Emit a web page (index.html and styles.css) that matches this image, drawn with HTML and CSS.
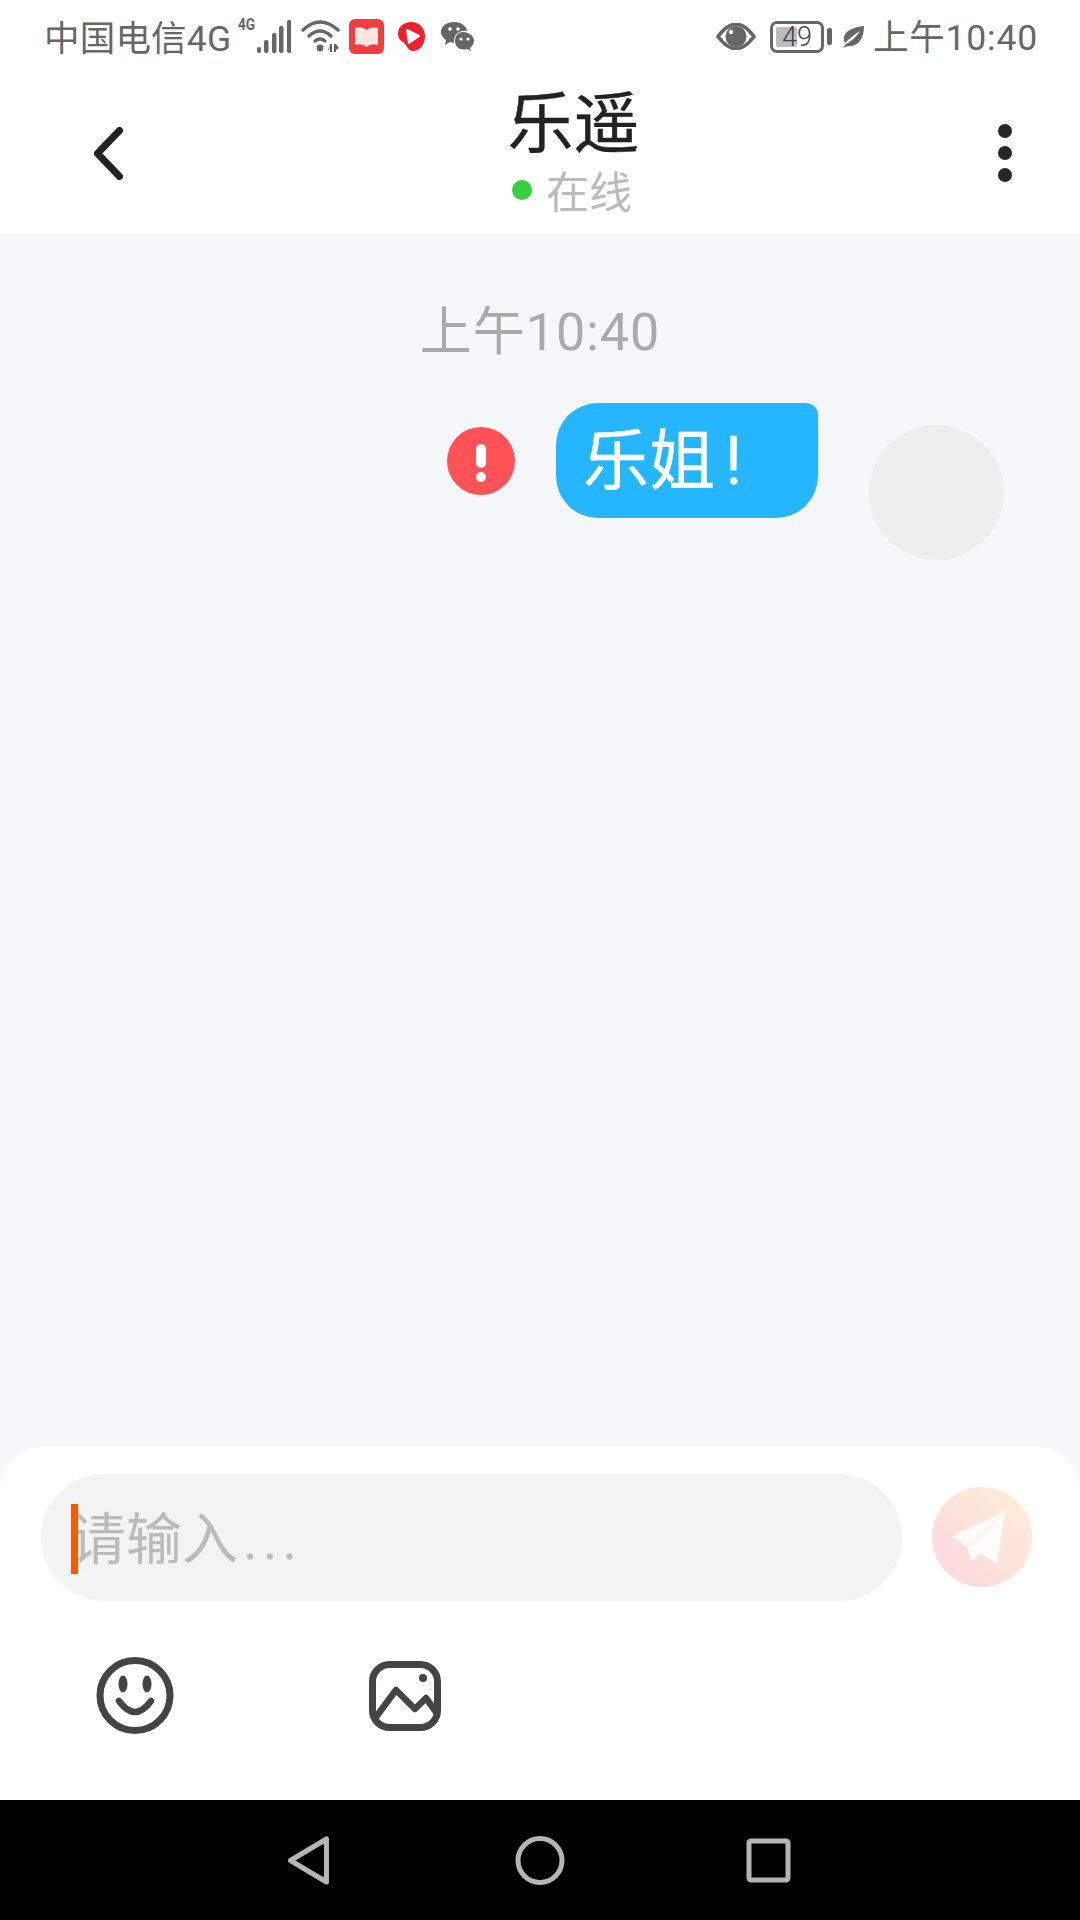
FILE: index.html
```html
<!DOCTYPE html>
<html lang="zh-CN">
<head>
<meta charset="utf-8">
<title>乐遥</title>
<link rel="stylesheet" href="styles.css">
</head>
<body>
<div class="phone">
  <div class="status">
    <div class="status-left">
      <span class="carrier">中国电信4G</span>
      <span class="tiny">4G</span>
      <svg class="ic-signal" viewBox="257 19 34 33"><g fill="#666"><rect x="257" y="46" width="4" height="6" rx="2"/><rect x="264" y="39" width="4.5" height="13" rx="2"/><rect x="272" y="32" width="4.5" height="20" rx="2"/><rect x="279" y="25" width="4.5" height="27" rx="2"/><rect x="287" y="19" width="4.5" height="33" rx="2"/></g></svg>
      <svg class="ic-wifi" viewBox="301 19 40 34"><g fill="none" stroke="#666" stroke-width="3.4" stroke-linecap="round"><path d="M303 30 Q320 14 338 30"/><path d="M309 36 Q320 26 331 36"/><path d="M315 41 Q320 37 325 41"/></g><circle cx="320" cy="48" r="3.4" fill="#666"/><path d="M330 44 V52 H332 V44 Z M329 50 L331 43 L328 50 Z M334 44 V52 H336 V44 Z M336 44 L339 48 L336 50 Z" fill="#666"/></svg>
      <svg class="ic-book" viewBox="349 19 35 35"><rect x="349" y="19" width="35" height="35" rx="6" fill="#f33d42"/><path d="M355 28 Q363 26 366.500 30 Q371 26 378 28 V45 Q371 43 366.500 47 Q362 43 355 45 Z" fill="#fbe6e0"/></svg>
      <svg class="ic-video" viewBox="398 22 27 29"><path d="M411 22 C420 22 425 29 425 36 C425 45 419 51 413 51 C408 51 407 45 403 42 C399 40 398 37 398 33 C398 27 404 22 411 22 Z" fill="#f0202f"/><path d="M407 30 L419 36 L409 43 Z" fill="#fff" stroke="#fff" stroke-width="2" stroke-linejoin="round"/></svg>
      <svg class="ic-wechat" viewBox="441 22 33 30"><path d="M454 22 C462 22 467 27 467 31 C459 30 453 35 454 43 L450 42 L445 45 L446 40 C443 38 441 35 441 32 C441 26 447 22 454 22 Z" fill="#666"/><path d="M463 32 C469 32 474 36 474 41 C474 44 472 46 470 48 L471 51 L467 49 C460 51 455 47 455 41 C455 36 458 32 463 32 Z" fill="#666"/><g fill="#fff"><circle cx="450" cy="29" r="1.800"/><circle cx="458" cy="29" r="1.800"/><circle cx="461" cy="39" r="1.600"/><circle cx="468" cy="39" r="1.600"/></g></svg>
    </div>
    <div class="status-right">
      <svg class="ic-eye" viewBox="716 23 40 27"><path d="M718 36.500 Q736 12 754 36.500 Q736 61 718 36.500 Z" fill="none" stroke="#666" stroke-width="3.600" stroke-linejoin="round"/><circle cx="736" cy="36.500" r="10.500" fill="#666"/><circle cx="731" cy="32" r="2.200" fill="#fff"/></svg>
      <div class="battery">
        <div class="battery-fill"></div>
        <span class="battery-num">49</span>
      </div>
      <div class="battery-nub"></div>
      <svg class="ic-leaf" viewBox="842 25 22 22"><path d="M864 25 C864 38 858 46 848 45 L843 47 L846 43 C855 38 858 33 860 30 C855 33 849 38 845 42 C840 32 852 26 864 25 Z" fill="#666"/></svg>
      <span class="clock">上午10:40</span>
    </div>
  </div>

  <header class="header">
    <svg class="ic-back" viewBox="94 127 29 53"><path d="M119.500 130.500 L97.500 153.500 L119.500 176.500" fill="none" stroke="#222" stroke-width="7" stroke-linecap="round" stroke-linejoin="round"/></svg>
    <div class="title-block">
      <div class="title">乐遥</div>
      <div class="presence"><i class="presence-dot"></i><span>在线</span></div>
    </div>
    <div class="more"><i></i><i></i><i></i></div>
  </header>

  <main class="chat">
    <div class="time">上午10:40</div>
    <div class="message">
      <svg class="ic-error" viewBox="447 426 68 68"><circle cx="481" cy="460" r="34" fill="#ff5357"/><rect x="476" y="443" width="10" height="24" rx="5" fill="#fff"/><circle cx="481" cy="476" r="5" fill="#fff"/></svg>
      <div class="bubble">乐姐<span class="bang">!</span></div>
      <div class="avatar"></div>
    </div>
  </main>

  <section class="composer">
    <div class="input-row">
      <div class="input">
        <i class="caret"></i>
        <span>请输入<span class="ellipsis">...</span></span>
      </div>
      <div class="send">
        <svg class="ic-plane" viewBox="932 1487 100 100"><path d="M1005 1511 L952 1536 L967 1547 L972 1562 L980 1553 L997 1564 Z" fill="#fffdfc"/><path d="M1000 1516 L968 1547" stroke="#fdeeee" stroke-width="1.200"/></svg>
      </div>
    </div>
    <div class="tools">
      <svg class="ic-smile" viewBox="96 1657 78 77"><circle cx="135" cy="1695.500" r="35" fill="none" stroke="#444" stroke-width="7"/><ellipse cx="123" cy="1684" rx="4.500" ry="8.500" fill="#444"/><ellipse cx="147" cy="1684" rx="4.500" ry="8.500" fill="#444"/><path d="M119 1701 Q135 1723 151 1701" fill="none" stroke="#444" stroke-width="6.500" stroke-linecap="round"/></svg>
      <svg class="ic-image" viewBox="369 1660 72 70"><rect x="372.500" y="1663.500" width="65" height="63" rx="17" fill="none" stroke="#444" stroke-width="7"/><circle cx="423" cy="1677" r="4" fill="#444"/><path d="M376 1716 L396 1689 L415 1708 L426 1697 L436 1711" fill="none" stroke="#444" stroke-width="6.500" stroke-linecap="round" stroke-linejoin="round"/></svg>
    </div>
  </section>

  <nav class="navbar">
    <svg class="ic-nav-back" viewBox="288 1835 42 49"><path d="M327 1838 V1881 L291 1859.500 Z" fill="none" stroke="#b5b5b5" stroke-width="5" stroke-linejoin="round"/></svg>
    <svg class="ic-nav-home" viewBox="515 1835 50 49"><ellipse cx="540" cy="1859.500" rx="22" ry="22" fill="none" stroke="#b5b5b5" stroke-width="5"/></svg>
    <svg class="ic-nav-square" viewBox="747 1837 45 45"><rect x="750" y="1840" width="39" height="39" rx="2" fill="none" stroke="#b5b5b5" stroke-width="5"/></svg>
  </nav>
</div>
</body>
</html>
```

FILE: styles.css
```css
* { box-sizing: border-box; }
html, body { margin: 0; padding: 0; }
body {
  width: 1080px;
  height: 1920px;
  overflow: hidden;
  background: #f6f7f9;
  font-family: Roboto, "Noto Sans CJK SC", sans-serif;
}
svg { display: block; flex: none; }
i { display: block; }

.phone { width: 1080px; height: 1920px; display: flex; flex-direction: column; }

/* Status bar */
.status {
  height: 73px;
  background: #fff;
  display: flex;
  justify-content: space-between;
  align-items: center;
  padding: 0 42px 0 44px;
  color: #666;
}
.status-left, .status-right { display: flex; align-items: center; }
.carrier { font-size: 35.500px; line-height: 40px; white-space: nowrap; width: 189px; margin-top: 4px; letter-spacing: .2px; }
.tiny { font-size: 16px; font-weight: 700; line-height: 16px; width: 19px; margin: -24px 0 0 5px; transform: scaleX(.85); transform-origin: left; }
.ic-signal { width: 34px; height: 33px; margin-top: -1px; }
.ic-wifi { width: 40px; height: 34px; margin-left: 10px; margin-top: -1px; }
.ic-book { width: 35px; height: 35px; margin-left: 8px; }
.ic-video { width: 27px; height: 29px; margin-left: 14px; }
.ic-wechat { width: 33px; height: 30px; margin-left: 16px; }

.ic-eye { width: 40px; height: 27px; margin-left: -1px; }
.battery {
  position: relative;
  width: 54px;
  height: 32px;
  margin-left: 14px;
  border: 3px solid #666;
  border-radius: 7px;
  display: flex;
  align-items: center;
  justify-content: center;
}
.battery-fill { position: absolute; left: 3px; top: 3px; width: 21px; height: 20px; background: #bdbdbd; border-radius: 2px; }
.battery-num { position: relative; font-size: 27px; line-height: 26px; font-weight: 300; color: #444; }
.battery-nub { width: 5px; height: 17px; margin-left: 3px; background: #666; border-radius: 2px; }
.ic-leaf { width: 22px; height: 22px; margin-left: 10px; }
.clock { font-size: 35.500px; line-height: 40px; margin-left: 9px; letter-spacing: .8px; white-space: nowrap; margin-top: 2px; }

/* Header */
.header {
  height: 160px;
  background: #fff;
  display: flex;
  justify-content: space-between;
  align-items: center;
  padding: 0 68px 0 94px;
}
.ic-back { width: 29px; height: 53px; }
.title-block { margin-left: 26px; display: flex; flex-direction: column; align-items: center; }
.title { font-size: 66px; line-height: 70px; color: #222; margin-top: 2px; -webkit-text-stroke: .4px #222; }
.presence { display: flex; align-items: center; gap: 14px; font-size: 43px; line-height: 50px; color: #bbb; margin-top: 8px; margin-left: -3px; }
.presence-dot { width: 20px; height: 20px; border-radius: 50%; background: #38d03e; margin-top: -6px; }
.more { display: flex; flex-direction: column; gap: 8px; }
.more i { width: 14px; height: 14px; border-radius: 50%; background: #262626; }

/* Chat */
.chat { flex: 1; min-height: 0; background: #f6f7f9; }
.time { margin-top: 70px; text-align: center; font-size: 52px; line-height: 60px; color: #aaa; letter-spacing: 1px; }
.message { margin-top: 40px; display: flex; justify-content: flex-end; align-items: flex-start; padding-right: 76px; }
.ic-error { width: 68px; height: 68px; margin-top: 24px; }
.bubble {
  width: 262px;
  height: 115px;
  margin-left: 41px;
  padding: 2px 0 0 27px;
  background: #26b6ff;
  border-radius: 42px 12px 42px 42px;
  color: #fff;
  font-size: 66px;
  line-height: 113px;
  -webkit-text-stroke: .4px #fff;
}
.bang { margin-left: 10px; }
.avatar { width: 135px; height: 135px; margin: 22px 0 0 51px; border-radius: 50%; background: #eee; }

/* Composer */
.composer { height: 353px; background: #fff; border-radius: 42px 42px 0 0; padding: 27px 48px 0 41px; }
.input-row { display: flex; align-items: flex-start; }
.input {
  position: relative;
  width: 861px;
  height: 127px;
  border-radius: 64px;
  background: #f3f3f3;
  padding-left: 29px;
  font-size: 56px;
  line-height: 132px;
  color: #bbb;
  margin-right: 30px;
}
.caret { position: absolute; left: 30px; top: 30px; width: 7px; height: 70px; background: #f5590a; }
.ellipsis { letter-spacing: 5px; margin-left: 5px; }
.send { width: 100px; height: 100px; margin-top: 13px; border-radius: 50%; background: linear-gradient(45deg, #fdd6e0, #ffefd6); }
.ic-plane { width: 100px; height: 100px; }
.tools { display: flex; align-items: center; margin: 56px 0 0 55px; }
.ic-smile { width: 78px; height: 77px; }
.ic-image { width: 72px; height: 70px; margin-left: 195px; }

/* System nav */
.navbar { height: 120px; background: #000; display: flex; align-items: center; padding-left: 287px; }
.ic-nav-back { width: 43px; height: 49px; }
.ic-nav-home { width: 50px; height: 49px; margin-left: 185px; }
.ic-nav-square { width: 45px; height: 45px; margin-left: 181px; }
```
